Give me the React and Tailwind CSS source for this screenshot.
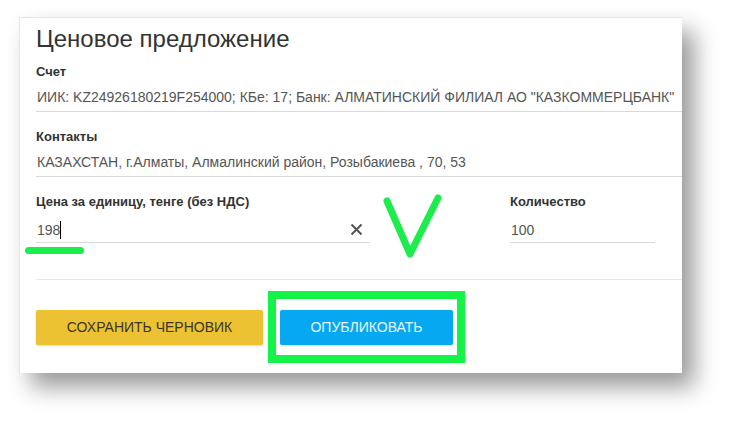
const font = { fontFamily: '"Liberation Sans", Arial, sans-serif' }

function Field({ label, value, pad = 'pb-[4px]' }) {
  return (
    <div>
      <div className="text-[13px] leading-[16px] font-bold text-[#333]">{label}</div>
      <div className={`mt-[7.5px] border-b border-[#d9d9d9] ${pad}`}>
        <div className="pl-px text-[14px] leading-[20px] text-[#555] whitespace-nowrap overflow-hidden">{value}</div>
      </div>
    </div>
  )
}

export default function App() {
  return (
    <div className="w-[730px] h-[423px] bg-white relative overflow-hidden" style={font}>
      <div className="ml-[19px] mt-[17px] w-[663px] h-[356px] bg-white border-l border-t border-[#e6e6e6] shadow-[12px_14px_22px_rgba(0,0,0,0.4)] pl-[16px] pt-[6.5px] overflow-hidden">
        <h1 className="text-[24px] leading-[28px] text-[#333]">Ценовое предложение</h1>

        <div className="mt-[11px]">
          <Field
            label="Счет"
            value='ИИК: KZ24926180219F254000; КБе: 17; Банк: АЛМАТИНСКИЙ ФИЛИАЛ АО "КАЗКОММЕРЦБАНК"'
          />
        </div>

        <div className="mt-[16.5px]">
          <Field label="Контакты" value="КАЗАХСТАН, г.Алматы, Алмалинский район, Розыбакиева , 70, 53" />
        </div>

        <div className="mt-[16.5px] flex">
          <div className="w-[334px]">
            <div className="text-[13px] leading-[16px] font-bold text-[#333]">Цена за единицу, тенге (без НДС)</div>
            <div className="mt-[10px] border-b border-[#d9d9d9] pb-[2.5px] flex items-center justify-between">
              <div className="pl-px text-[14px] leading-[20px] text-[#555] flex items-center">
                198<span className="inline-block w-px h-[18px] bg-black" />
              </div>
              <svg width="13" height="13" viewBox="0 0 13 13" className="mr-[7px]">
                <path d="M1.5 1.5 L11.5 11.5 M11.5 1.5 L1.5 11.5" stroke="#555" strokeWidth="2" />
              </svg>
            </div>
          </div>
          <div className="w-[145px] ml-[140px]">
            <div className="text-[13px] leading-[16px] font-bold text-[#333]">Количество</div>
            <div className="mt-[10px] border-b border-[#d9d9d9] pb-[2.5px]">
              <div className="pl-px text-[14px] leading-[20px] text-[#555]">100</div>
            </div>
          </div>
        </div>

        <div className="mt-[36px] border-t border-[#e8e8e8]" />

        <div className="mt-[30px] flex gap-[17px]">
          <button className="w-[227px] h-[35px] bg-[#ecc233] rounded-[2px] text-[14px] text-[#3a3526] shadow-[0_1px_2px_rgba(0,0,0,0.15)]">
            СОХРАНИТЬ ЧЕРНОВИК
          </button>
          <button className="w-[173px] h-[35px] bg-[#07a8f2] rounded-[2px] text-[14px] text-[#e8f6ff] shadow-[0_1px_2px_rgba(0,0,0,0.15)]">
            ОПУБЛИКОВАТЬ
          </button>
        </div>
      </div>

      {/* annotations */}
      <div className="absolute left-[25px] top-[247px] w-[59px] h-[7px] rounded-full bg-[#1aee4c]" />
      <div className="absolute left-[268px] top-[291px] w-[197px] h-[72px] border-[8px] border-[#16f348]" />
      <svg className="absolute left-[380px] top-[192px]" width="66" height="70" viewBox="0 0 66 70">
        <path d="M7 9 L30 62 L58 6" fill="none" stroke="#1ded4c" strokeWidth="7" strokeLinecap="round" strokeLinejoin="round" />
      </svg>
    </div>
  )
}
